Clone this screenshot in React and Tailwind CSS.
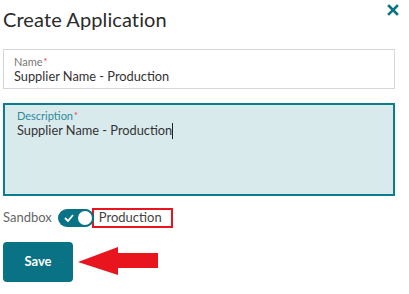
export default function App() {
  return (
    <div className="w-[409px] h-[294px] bg-white font-['Lato',sans-serif] text-[#333]">
      <div className="flex items-start justify-between pl-[3px] pr-[10px] h-[49px]">
        <h1 className="text-[20px] leading-[20px] mt-[9px] text-[#2b2b2b] font-normal tracking-[0.1px]">Create Application</h1>
        <svg width="12" height="12" viewBox="0 0 12 12" className="mt-[4px]">
          <path d="M2 2 L10 10 M10 2 L2 10" stroke="#0a7285" strokeWidth="2.6" strokeLinecap="square" />
        </svg>
      </div>

      <div className="ml-[3px] w-[392px] h-[40px] border border-[#d6d6d6] px-[10px] pt-[5px]">
        <div className="text-[11px] leading-[13px] text-[#777]">
          Name<span className="text-[#e0344a] text-[9px] align-top ml-[1px]">*</span>
        </div>
        <div className="text-[12.8px] leading-[17px] text-[#333]">Supplier Name - Production</div>
      </div>

      <div className="ml-[3px] mt-[14px] w-[392px] h-[93px] border-2 border-[#0b7d8c] bg-[#d9eaed] px-[12px] pt-[4px]">
        <div className="text-[11px] leading-[13px] text-[#2e8b9a]">
          Description<span className="text-[#e0344a] text-[9px] align-top ml-[1px]">*</span>
        </div>
        <div className="text-[12.8px] leading-[17px] text-[#333] flex items-center">
          Supplier Name - Production<span className="inline-block w-[1px] h-[16px] bg-[#222]"></span>
        </div>
      </div>

      <div className="flex items-center ml-[3px] mt-[11px] h-[22px]">
        <span className="text-[13px] text-[#666]">Sandbox</span>
        <div className="ml-[6px] w-[36px] h-[18px] rounded-full bg-[#0a7285] relative flex items-center">
          <svg width="10" height="8" viewBox="0 0 10 8" className="ml-[6px]">
            <path d="M1 4 L4 7 L9 1" stroke="white" strokeWidth="1.8" fill="none" />
          </svg>
          <div className="absolute right-0 top-0 w-[18px] h-[18px] rounded-full bg-white border-2 border-[#0a7285]"></div>
        </div>
        <div className="-ml-[2px] w-[81px] h-[20px] border-2 border-[#e8141e] flex items-center pl-[5px]">
          <span className="text-[13px] text-[#444]">Production</span>
        </div>
      </div>

      <div className="flex items-center ml-[3px] mt-[13px]">
        <button className="w-[70px] h-[40px] rounded-[4px] bg-[#0a7285] text-white text-[13px] font-bold">Save</button>
        <svg width="82" height="30" viewBox="0 0 82 30" className="ml-[5px]">
          <polygon points="0,15 40,0 40,6 80,6 80,21 40,21 40,28" fill="#e8141e" />
        </svg>
      </div>
    </div>
  );
}
